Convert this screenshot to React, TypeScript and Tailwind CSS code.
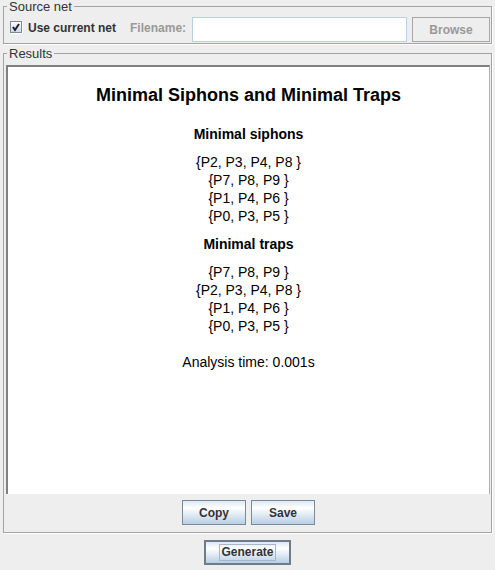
export default function App() {
  const siphons = ["{P2, P3, P4, P8 }", "{P7, P8, P9 }", "{P1, P4, P6 }", "{P0, P3, P5 }"];
  const traps = ["{P7, P8, P9 }", "{P2, P3, P4, P8 }", "{P1, P4, P6 }", "{P0, P3, P5 }"];

  return (
    <div className="w-[495px] h-[570px] overflow-hidden bg-[#eeeeee] text-[#333333] font-['Liberation_Sans',Arial,sans-serif]">
      {/* Source net */}
      <fieldset className="mx-[3px] border border-[#a3a3a3] shadow-[1px_1px_0_#ffffff]">
        <legend className="ml-[3px] px-[2px] text-[13px] leading-[13px]">Source net</legend>
        <div className="flex items-center h-[25px] mt-[4px] mb-[1px] pl-[6px]">
          <div className="flex items-center mb-[4px]">
            <svg width="13" height="13" viewBox="0 0 13 13" className="shrink-0">
              <defs>
                <linearGradient id="cb" x1="0" y1="0" x2="0" y2="1">
                  <stop offset="0" stopColor="#ffffff" />
                  <stop offset="1" stopColor="#c6d7ea" />
                </linearGradient>
              </defs>
              <rect x="0.5" y="0.5" width="11" height="11" fill="url(#cb)" stroke="#7a8a99" />
              <line x1="12.5" y1="1" x2="12.5" y2="13" stroke="#ffffff" />
              <line x1="1" y1="12.5" x2="13" y2="12.5" stroke="#ffffff" />
              <path d="M3 6 L5 9 L9 3" fill="none" stroke="#222222" strokeWidth="2" />
            </svg>
            <span className="ml-[5px] text-[12px] font-bold">Use current net</span>
            <span className="ml-[14px] text-[12px] font-bold text-[#999999]">Filename:</span>
          </div>
          <div className="ml-[6px] w-[215px] h-[25px] bg-white border border-[#b8cfe5]" />
          <button className="ml-[5px] w-[78px] h-[25px] border border-[#a8a8a8] bg-[#eeeeee] text-[12px] font-bold text-[#999999]">
            Browse
          </button>
        </div>
      </fieldset>

      {/* Results */}
      <fieldset className="mx-[3px] mt-[3px] border border-[#a3a3a3] shadow-[1px_1px_0_#ffffff]">
        <legend className="ml-[3px] px-[2px] text-[13px] leading-[13px]">Results</legend>
        <div className="pt-[5px] pl-[2px]">
          <div className="w-[484px] h-[429px] bg-white border-t-2 border-l-2 border-r border-[#808080] border-r-[#b0b0b0] text-black">
            <div className="flex flex-col items-center pt-[17px]">
              <h2 className="text-[18px] font-bold leading-[22px]">Minimal Siphons and Minimal Traps</h2>
              <h3 className="mt-[19px] text-[14px] font-bold leading-[18px]">Minimal siphons</h3>
              <div className="mt-[10px] flex flex-col items-center text-[14px] leading-[18px]">
                {siphons.map((s, i) => (
                  <div key={i}>{s}</div>
                ))}
              </div>
              <h3 className="mt-[10px] text-[14px] font-bold leading-[18px]">Minimal traps</h3>
              <div className="mt-[10px] flex flex-col items-center text-[14px] leading-[18px]">
                {traps.map((s, i) => (
                  <div key={i}>{s}</div>
                ))}
              </div>
              <p className="mt-[18px] text-[14px] leading-[18px]">Analysis time: 0.001s</p>
            </div>
          </div>
          <div className="flex justify-center gap-[5px] mt-[6px] pb-[7px]">
            <button className="w-[64px] h-[25px] border border-[#7a8a99] bg-[linear-gradient(180deg,#dde8f3_0%,#ffffff_30%,#b8cfe5_100%)] text-[12px] font-bold text-[#333333]">
              Copy
            </button>
            <button className="w-[64px] h-[25px] border border-[#7a8a99] bg-[linear-gradient(180deg,#dde8f3_0%,#ffffff_30%,#b8cfe5_100%)] text-[12px] font-bold text-[#333333]">
              Save
            </button>
          </div>
        </div>
      </fieldset>

      <div className="flex justify-center mt-[7px]">
        <button className="w-[87px] h-[25px] border-2 border-[#6d7b8a] bg-[linear-gradient(180deg,#dde8f3_0%,#ffffff_30%,#b8cfe5_100%)] text-[12px] font-bold text-[#333333] flex items-center justify-center">
          <span className="border border-[#a3b8cc] px-[1px] leading-[15px]">Generate</span>
        </button>
      </div>
    </div>
  );
}
